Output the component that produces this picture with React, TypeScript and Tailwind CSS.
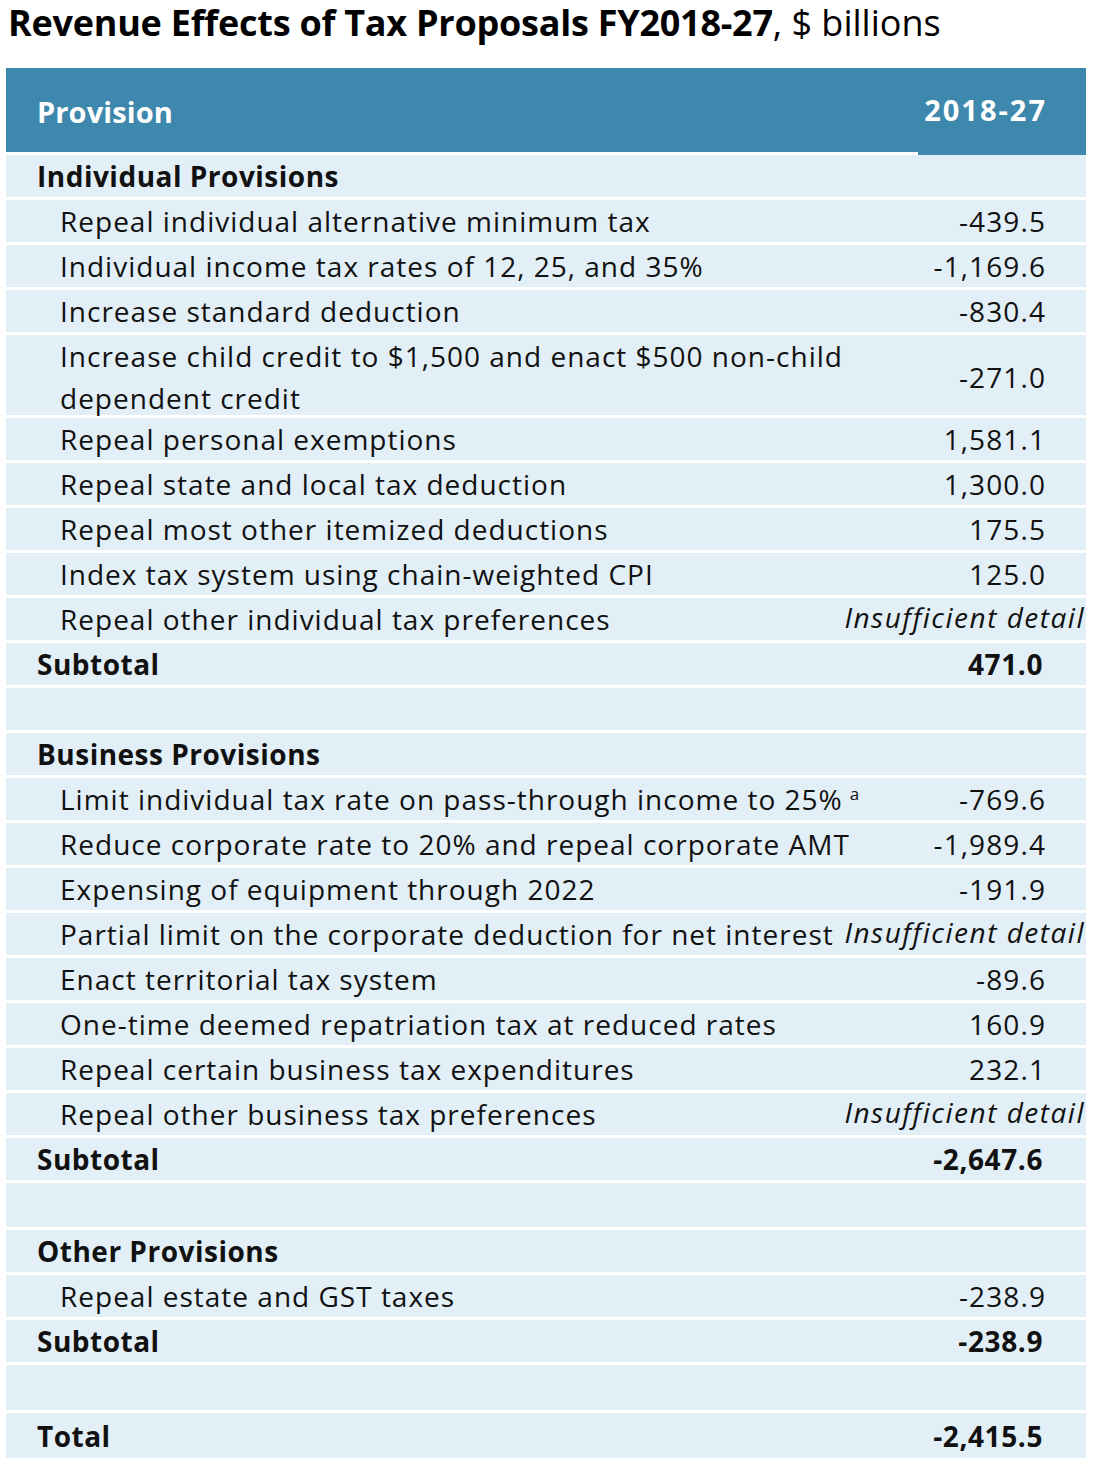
import React from "react";

type Row =
  | { kind: "section"; label: string }
  | { kind: "item"; label: React.ReactNode; value: string; tall?: boolean }
  | { kind: "subtotal"; label: string; value: string; h?: string }
  | { kind: "blank"; h?: string };

const rows: Row[] = [
  { kind: "section", label: "Individual Provisions" },
  { kind: "item", label: "Repeal individual alternative minimum tax", value: "-439.5" },
  { kind: "item", label: "Individual income tax rates of 12, 25, and 35%", value: "-1,169.6" },
  { kind: "item", label: "Increase standard deduction", value: "-830.4" },
  {
    kind: "item",
    label: "Increase child credit to $1,500 and enact $500 non-child dependent credit",
    value: "-271.0",
    tall: true,
  },
  { kind: "item", label: "Repeal personal exemptions", value: "1,581.1" },
  { kind: "item", label: "Repeal state and local tax deduction", value: "1,300.0" },
  { kind: "item", label: "Repeal most other itemized deductions", value: "175.5" },
  { kind: "item", label: "Index tax system using chain-weighted CPI", value: "125.0" },
  { kind: "item", label: "Repeal other individual tax preferences", value: "Insufficient detail" },
  { kind: "subtotal", label: "Subtotal", value: "471.0" },
  { kind: "blank" },
  { kind: "section", label: "Business Provisions" },
  {
    kind: "item",
    label: (
      <>
        Limit individual tax rate on pass-through income to 25%
        <sup className="ml-[7px] text-[17px] tracking-normal relative -top-[10px]">a</sup>
      </>
    ),
    value: "-769.6",
  },
  { kind: "item", label: "Reduce corporate rate to 20% and repeal corporate AMT", value: "-1,989.4" },
  { kind: "item", label: "Expensing of equipment through 2022", value: "-191.9" },
  {
    kind: "item",
    label: "Partial limit on the corporate deduction for net interest",
    value: "Insufficient detail",
  },
  { kind: "item", label: "Enact territorial tax system", value: "-89.6" },
  { kind: "item", label: "One-time deemed repatriation tax at reduced rates", value: "160.9" },
  { kind: "item", label: "Repeal certain business tax expenditures", value: "232.1" },
  { kind: "item", label: "Repeal other business tax preferences", value: "Insufficient detail" },
  { kind: "subtotal", label: "Subtotal", value: "-2,647.6" },
  { kind: "blank", h: "h-[44px]" },
  { kind: "section", label: "Other Provisions" },
  { kind: "item", label: "Repeal estate and GST taxes", value: "-238.9" },
  { kind: "subtotal", label: "Subtotal", value: "-238.9" },
  { kind: "blank", h: "h-[45px]" },
  { kind: "subtotal", label: "Total", value: "-2,415.5", h: "h-[45px]" },
];

const rowBase = "grid grid-cols-[912px_168px] bg-[#e2eff6] text-[#111]";

const TableRow: React.FC<{ row: Row }> = ({ row }) => {
  if (row.kind === "blank") {
    return <div className={`${rowBase} ${row.h ?? "h-[42px]"}`} />;
  }
  if (row.kind === "section") {
    return (
      <div className={`${rowBase} h-[42px] items-center`}>
        <div className="pl-[31px] font-bold text-[28px] tracking-[0.5px]">{row.label}</div>
        <div />
      </div>
    );
  }
  if (row.kind === "subtotal") {
    return (
      <div className={`${rowBase} ${row.h ?? "h-[42px]"} items-center font-bold text-[28px]`}>
        <div className="pl-[31px] tracking-[0.5px]">{row.label}</div>
        <div className="text-right pr-[43px] tracking-[0.6px] whitespace-nowrap">{row.value}</div>
      </div>
    );
  }
  const insufficient = row.value === "Insufficient detail";
  return (
    <div className={`${rowBase} ${row.tall ? "h-[80px]" : "h-[42px]"} items-center text-[28px]`}>
      <div className="pl-[54px] pr-[40px] leading-[42px] tracking-[1px]">{row.label}</div>
      {insufficient ? (
        <div className="text-right pr-[1px] italic whitespace-nowrap -ml-[90px] -mt-[4px] tracking-[1.5px]">
          {row.value}
        </div>
      ) : (
        <div className="text-right pr-[40px] whitespace-nowrap tracking-[1.1px]">{row.value}</div>
      )}
    </div>
  );
};

export default function App() {
  return (
    <div className="w-[1096px] min-h-[1468px] bg-white">
      <h1
        className="pl-[8px] h-[68px] text-[36px] leading-[46px] text-black whitespace-nowrap"
        style={{ fontFamily: '"Open Sans", sans-serif' }}
      >
        <span className="font-bold tracking-[-0.25px]">Revenue Effects of Tax Proposals FY2018-27</span>
        <span>, $ billions</span>
      </h1>
      <div
        className="ml-[6px] w-[1080px] flex flex-col gap-[3px]"
        style={{ fontFamily: '"Open Sans", sans-serif' }}
      >
        <div className="grid grid-cols-[912px_168px] h-[87px] -mb-[3px] bg-[#3d88ac] text-white font-bold text-[29px]">
          <div className="flex items-center pl-[31px] border-b-[3px] border-white pt-[3px] tracking-[0.1px]">
            Provision
          </div>
          <div className="flex items-center justify-end pr-[39px] pb-[3px] tracking-[2px]">2018-27</div>
        </div>
        {rows.map((row, i) => (
          <TableRow key={i} row={row} />
        ))}
      </div>
    </div>
  );
}
